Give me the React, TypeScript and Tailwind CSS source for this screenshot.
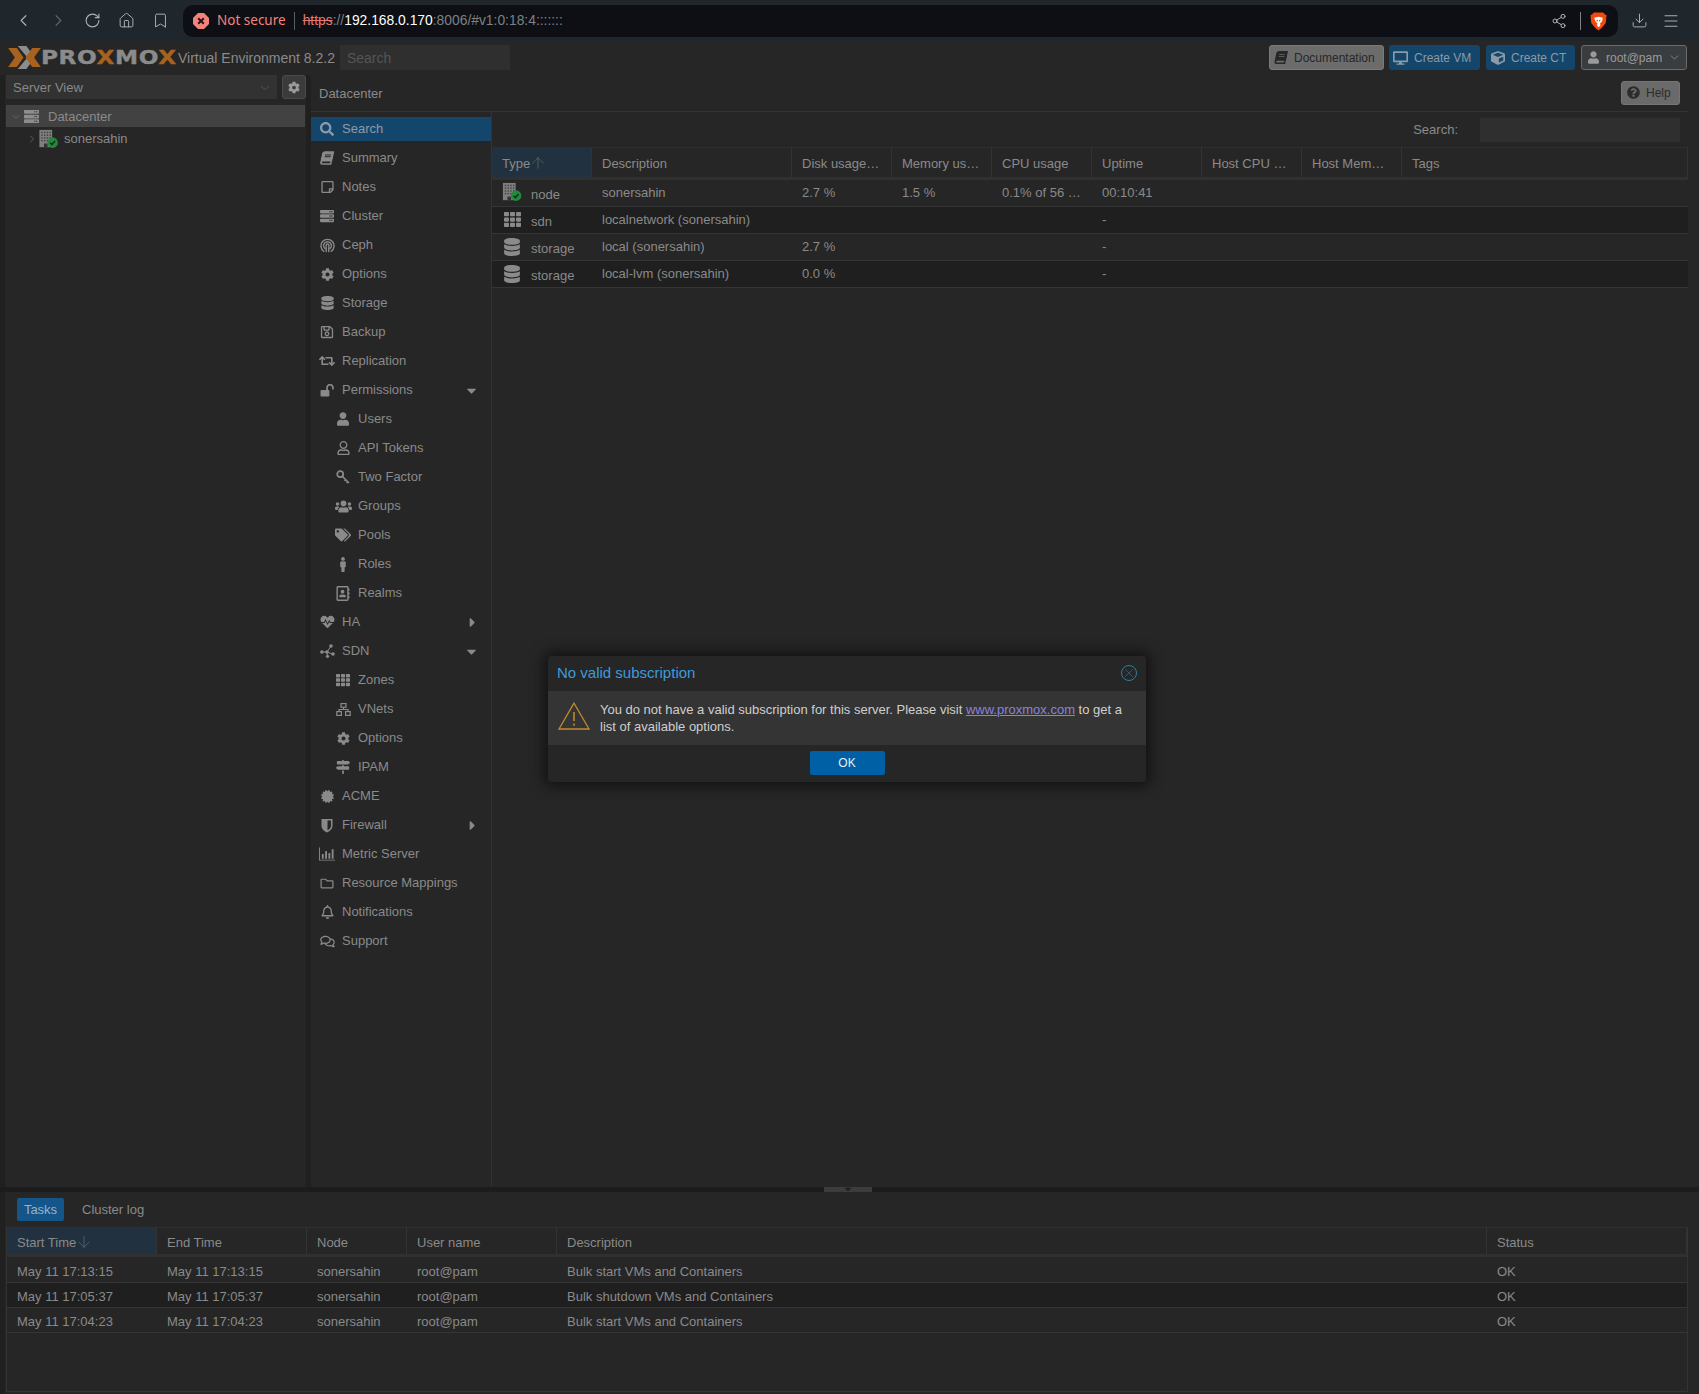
import React from "react";
import {
  FaSearch, FaBook, FaRegStickyNote, FaServer, FaCog, FaDatabase, FaRegSave, FaRetweet, FaUser, FaRegUser,
  FaUsers, FaTags, FaMale, FaRegAddressBook, FaHeartbeat, FaTh, FaMapSigns, FaCertificate,
  FaRegFolder, FaRegBell, FaRegComments, FaDesktop, FaCube, FaQuestionCircle,
  FaCaretDown, FaCaretRight,
} from "react-icons/fa";
import { ChevronLeft, ChevronRight, ChevronDown, RotateCw, Home, Bookmark, Share2, Download, Menu, ArrowUp, ArrowDown, X as XIcon } from "lucide-react";

type P = { className?: string };

const Ceph = ({ className = "" }: P) => (
  <svg viewBox="0 0 16 16" className={className} fill="none" stroke="currentColor" strokeWidth="1.5" strokeLinecap="round">
    <path d="M4 14.2A7 7 0 1 1 12 14.2" />
    <path d="M5.500 11.500A4.200 4.200 0 1 1 10.500 11.500" />
    <path d="M6.600 14.500 C7 12.500 6.300 10 6.600 8.500 A1.500 1.500 0 1 1 9.400 8.500 C9.700 10 9 12.500 9.400 14.500" />
  </svg>
);

const OpenLock = ({ className = "" }: P) => (
  <svg viewBox="0 0 16 14" className={className} fill="currentColor">
    <rect x="0.500" y="6.500" width="9.500" height="7" rx="1" />
    <path d="M7.500 6.500V4a3.200 3.200 0 0 1 6.400 0v2" fill="none" stroke="currentColor" strokeWidth="1.800" />
  </svg>
);

const KeyIcon = ({ className = "" }: P) => (
  <svg viewBox="0 0 14 14" className={className} fill="none" stroke="currentColor">
    <circle cx="4.200" cy="4.200" r="3" strokeWidth="1.700" />
    <path d="M6.500 6.500L13 13M10 9.500l-1.500 1.500M12 11.500l-1.500 1.500" strokeWidth="1.500" />
  </svg>
);

const SdnIcon = ({ className = "" }: P) => (
  <svg viewBox="0 0 15 14" className={className} fill="currentColor" stroke="currentColor">
    <path d="M7 8L11 2M7 8L2 8M7 8L12 10M7 8L7.500 12.500" strokeWidth="1" />
    <circle cx="7" cy="8" r="1.800" stroke="none" />
    <circle cx="11" cy="2" r="1.800" stroke="none" />
    <circle cx="1.900" cy="8" r="1.800" stroke="none" />
    <circle cx="13" cy="10" r="1.800" stroke="none" />
    <circle cx="7.500" cy="12.300" r="1.600" stroke="none" />
  </svg>
);

const VNetIcon = ({ className = "" }: P) => (
  <svg viewBox="0 0 15 13" className={className} fill="none" stroke="currentColor" strokeWidth="1.200">
    <rect x="5" y="0.600" width="5" height="3.600" />
    <rect x="0.800" y="8.600" width="4.600" height="3.800" />
    <rect x="9.600" y="8.600" width="4.600" height="3.800" />
    <path d="M7.500 4.200V6.500M3 8.600V6.500H12V8.600" />
  </svg>
);

const ShieldIcon = ({ className = "" }: P) => (
  <svg viewBox="0 0 12 15" className={className} fill="currentColor" fillRule="evenodd">
    <path d="M.5 1h11v7c0 3-3 5.500-5.500 6.500C3.500 13.500.5 11 .5 8zM6.500 2.500v9.800C8.300 11.300 10 9.800 10 8V2.500z" />
  </svg>
);

const MetricIcon = ({ className = "" }: P) => (
  <svg viewBox="0 0 17 14" className={className} fill="currentColor">
    <path d="M0 0h1v13h16v1H0z" />
    <rect x="3" y="7" width="2" height="5" />
    <rect x="6.500" y="4" width="2" height="8" />
    <rect x="10" y="6" width="2" height="6" />
    <rect x="13.500" y="2" width="2" height="10" />
  </svg>
);

const NodeIcon = ({ className = "" }: P) => (
  <svg viewBox="0 0 22 22" className={className}>
    <rect x="1" y="1" width="14" height="19" fill="#7f7f7f" />
    <g fill="#444">
      {[3, 6, 9, 12].map((y) =>
        [3, 6, 9, 12].map((x) => <rect key={`${x}-${y}`} x={x} y={y} width="1.600" height="1.600" />)
      )}
      <rect x="6" y="16" width="4" height="4" fill="#333" />
    </g>
    <circle cx="15.500" cy="15" r="5.800" fill="#218a3d" />
    <path d="M12.800 15.200l2 2 3.400-4" stroke="#1c2b20" strokeWidth="1.700" fill="none" />
  </svg>
);

const ProxLogo = () => (
  <div className="flex items-center w-[170px] shrink-0">
    <svg viewBox="0 0 34 26" className="w-[33px] h-[25px] shrink-0">
      <path d="M10 1h9l5 7-4 5-10-12z" fill="#8d8d8d" />
      <path d="M10 25h9l5-7-4-5-10 12z" fill="#8d8d8d" />
      <path d="M0 3h9l7 10-7 10H0l7-10z" fill="#a8621f" />
      <path d="M34 3h-9l-7 10 7 10h9l-7-10z" fill="#a8621f" />
    </svg>
    <span className="font-['DejaVu_Sans',sans-serif] font-bold text-[19px] leading-none text-[#8b8b8b] tracking-[0.5px] inline-block origin-left scale-x-[1.22] [-webkit-text-stroke:0.4px_currentColor]">
      PRO<span className="text-[#a8621f]">X</span>MO<span className="text-[#a8621f]">X</span>
    </span>
  </div>
);

const Brave = () => (
  <svg viewBox="0 0 18 20" className="w-[17px] h-[20px]">
    <path d="M4 1h10l1.800 2 1.700.6-.8 8.400L12 17.600 9 20l-3-2.400L1.300 12 .5 3.600 2.200 3z" fill="#f1490f" />
    <path d="M4.500 6.500l4.500-1 4.500 1-.8 4-2 2 .3 2.500L9 16.500 7.500 15l.3-2.500-2-2z" fill="#fff" />
    <path d="M7 8.500l1.500.8v1.200L7 10zM11 8.500l-1.500.8v1.200l1.500-.5z" fill="#f1490f" />
  </svg>
);

type NavItem = { label: string; icon: React.ReactNode; sub?: boolean; caret?: "down" | "right"; active?: boolean };
const ic = "w-[14px] h-[14px]";
const nav: NavItem[] = [
  { label: "Search", icon: <FaSearch className="w-[14px] h-[14px]" />, active: true },
  { label: "Summary", icon: <FaBook className="w-[12px] h-[14px] -skew-x-12" /> },
  { label: "Notes", icon: <FaRegStickyNote className="w-[13px] h-[14px]" /> },
  { label: "Cluster", icon: <FaServer className={ic} /> },
  { label: "Ceph", icon: <Ceph className="w-[15px] h-[15px]" /> },
  { label: "Options", icon: <FaCog className="w-[13px] h-[13px]" /> },
  { label: "Storage", icon: <FaDatabase className="w-[13px] h-[14px]" /> },
  { label: "Backup", icon: <FaRegSave className="w-[14px] h-[14px]" /> },
  { label: "Replication", icon: <FaRetweet className="w-[16px] h-[14px]" /> },
  { label: "Permissions", icon: <OpenLock className="w-[15px] h-[13px]" />, caret: "down" },
  { label: "Users", icon: <FaUser className="w-[12px] h-[14px]" />, sub: true },
  { label: "API Tokens", icon: <FaRegUser className="w-[13px] h-[14px]" />, sub: true },
  { label: "Two Factor", icon: <KeyIcon className="w-[14px] h-[14px]" />, sub: true },
  { label: "Groups", icon: <FaUsers className="w-[17px] h-[15px]" />, sub: true },
  { label: "Pools", icon: <FaTags className="w-[16px] h-[14px]" />, sub: true },
  { label: "Roles", icon: <FaMale className="w-[12px] h-[15px]" />, sub: true },
  { label: "Realms", icon: <FaRegAddressBook className="w-[14px] h-[15px]" />, sub: true },
  { label: "HA", icon: <FaHeartbeat className="w-[15px] h-[14px]" />, caret: "right" },
  { label: "SDN", icon: <SdnIcon className="w-[15px] h-[14px]" />, caret: "down" },
  { label: "Zones", icon: <FaTh className={ic} />, sub: true },
  { label: "VNets", icon: <VNetIcon className="w-[15px] h-[13px]" />, sub: true },
  { label: "Options", icon: <FaCog className="w-[13px] h-[13px]" />, sub: true },
  { label: "IPAM", icon: <FaMapSigns className={ic} />, sub: true },
  { label: "ACME", icon: <FaCertificate className="w-[13px] h-[13px]" /> },
  { label: "Firewall", icon: <ShieldIcon className="w-[12px] h-[15px]" />, caret: "right" },
  { label: "Metric Server", icon: <MetricIcon className="w-[16px] h-[14px]" /> },
  { label: "Resource Mappings", icon: <FaRegFolder className="w-[14px] h-[13px]" /> },
  { label: "Notifications", icon: <FaRegBell className="w-[13px] h-[14px]" /> },
  { label: "Support", icon: <FaRegComments className="w-[15px] h-[13px]" /> },
];

const resCols = [
  { t: "Type", w: "w-[100px]" },
  { t: "Description", w: "w-[200px]" },
  { t: "Disk usage…", w: "w-[100px]" },
  { t: "Memory us…", w: "w-[100px]" },
  { t: "CPU usage", w: "w-[100px]" },
  { t: "Uptime", w: "w-[110px]" },
  { t: "Host CPU …", w: "w-[100px]" },
  { t: "Host Mem…", w: "w-[100px]" },
  { t: "Tags", w: "flex-1" },
];

const resRows = [
  { type: "node", icon: <NodeIcon className="w-[22px] h-[22px]" />, desc: "sonersahin", disk: "2.7 %", mem: "1.5 %", cpu: "0.1% of 56 …", up: "00:10:41", alt: false },
  { type: "sdn", icon: <FaTh className="w-[17px] h-[17px]" />, desc: "localnetwork (sonersahin)", disk: "", mem: "", cpu: "", up: "-", alt: true },
  { type: "storage", icon: <FaDatabase className="w-[16px] h-[18px] mt-[1px]" />, desc: "local (sonersahin)", disk: "2.7 %", mem: "", cpu: "", up: "-", alt: false },
  { type: "storage", icon: <FaDatabase className="w-[16px] h-[18px] mt-[1px]" />, desc: "local-lvm (sonersahin)", disk: "0.0 %", mem: "", cpu: "", up: "-", alt: true },
];

const taskCols = [
  { t: "Start Time", w: "w-[150px]" },
  { t: "End Time", w: "w-[150px]" },
  { t: "Node", w: "w-[100px]" },
  { t: "User name", w: "w-[150px]" },
  { t: "Description", w: "w-[930px]" },
  { t: "Status", w: "flex-1" },
];
const tasks = [
  ["May 11 17:13:15", "sonersahin", "root@pam", "Bulk start VMs and Containers", false],
  ["May 11 17:05:37", "sonersahin", "root@pam", "Bulk shutdown VMs and Containers", true],
  ["May 11 17:04:23", "sonersahin", "root@pam", "Bulk start VMs and Containers", false],
] as const;

export default function App() {
  return (
    <div className="relative w-[1699px] h-[1394px] overflow-hidden flex flex-col bg-[#262626] text-[13px] text-[#8a8a8a] font-['Liberation_Sans',Arial,sans-serif]">
      {/* Browser toolbar */}
      <div className="h-[41px] shrink-0 bg-[#1f272d] flex items-center font-['Noto_Sans',sans-serif]">
        <div className="w-[183px] shrink-0 flex items-center text-[#a9aeb3]">
          <ChevronLeft className="w-[19px] h-[19px] ml-[14px]" strokeWidth={1.5} />
          <ChevronRight className="w-[19px] h-[19px] ml-[16px] text-[#5d6368]" strokeWidth={1.5} />
          <RotateCw className="w-[17px] h-[17px] ml-[16px]" strokeWidth={1.6} />
          <Home className="w-[17px] h-[17px] ml-[17px]" strokeWidth={1.4} />
          <Bookmark className="w-[17px] h-[17px] ml-[17px]" strokeWidth={1.4} />
        </div>
        <div className="w-[1435px] h-[32px] rounded-[10px] bg-[#0d0f14] flex items-center shrink-0">
          <svg viewBox="0 0 16 16" className="ml-[10px] w-[16px] h-[16px] shrink-0">
            <path d="M5 0h6l5 5v6l-5 5H5l-5-5V5z" fill="#f2837c" />
            <path d="M5.200 5.200l5.600 5.600M10.800 5.200l-5.600 5.600" stroke="#2a1312" strokeWidth="2" />
          </svg>
          <span className="ml-[8px] text-[#f2837c] text-[13.5px]">Not secure</span>
          <span className="ml-[8px] w-px h-[18px] bg-[#5a5f64]" />
          <span className="ml-[8px] text-[13.85px] text-[#7c8186] font-['Liberation_Sans',sans-serif]">
            <span className="text-[#e3776f] line-through">https</span>://<span className="text-white">192.168.0.170</span>:8006/#v1:0:18:4:::::::
          </span>
          <div className="ml-auto flex items-center text-[#b5babf]">
            <Share2 className="w-[16px] h-[16px]" strokeWidth={1.4} />
            <span className="ml-[13px] w-px h-[18px] bg-[#7c8186]" />
            <span className="ml-[9px] mr-[11px] flex"><Brave /></span>
          </div>
        </div>
        <div className="flex-1 flex items-center text-[#a9aeb3]">
          <Download className="w-[17px] h-[17px] ml-[13px]" strokeWidth={1.4} />
          <Menu className="w-[18px] h-[18px] ml-[14px]" strokeWidth={1.4} />
        </div>
      </div>

      {/* Proxmox header */}
      <div className="h-[34px] shrink-0 flex items-start pt-[4px] pl-[8px] pr-[12px]">
        <ProxLogo />
        <span className="text-[14px] leading-[26px] text-[#8a8a8a]">Virtual Environment 8.2.2</span>
        <div className="ml-[5px] w-[170px] h-[25px] bg-[#2f2f2f] text-[#555] px-[7px] leading-[26px] text-[14px]">Search</div>
        <div className="ml-auto flex h-[25px] text-[12px]">
          <div className="w-[115px] flex items-center rounded-[3px] bg-[#6c6c6c] border border-[#7a7a7a] text-[#272727] pl-[5px]">
            <FaBook className="w-[12px] h-[13px] -skew-x-12" /><span className="ml-[7px]">Documentation</span>
          </div>
          <div className="w-[91px] ml-[5px] flex items-center rounded-[3px] bg-[#14466b] text-[#8b9aa6] pl-[4px]">
            <FaDesktop className="w-[15px] h-[14px]" /><span className="ml-[6px]">Create VM</span>
          </div>
          <div className="w-[89px] ml-[6px] flex items-center rounded-[3px] bg-[#14466b] text-[#8b9aa6] pl-[5px]">
            <FaCube className="w-[14px] h-[14px]" /><span className="ml-[6px]">Create CT</span>
          </div>
          <div className="w-[106px] ml-[6px] flex items-center rounded-[3px] bg-[#3a3d3f] border border-[#6a6a6a] text-[#9a9a9a] pl-[6px]">
            <FaUser className="w-[11px] h-[13px]" /><span className="ml-[7px]">root@pam</span>
            <ChevronDown className="w-[13px] h-[13px] ml-auto mr-[5px]" strokeWidth={1.3} />
          </div>
        </div>
      </div>

      {/* Main */}
      <div className="flex-1 flex min-h-0 border-l-[5px] border-[#202020]">
        {/* Left tree */}
        <div className="w-[301px] shrink-0 flex flex-col pl-[1px]">
          <div className="flex gap-[5px] h-[24px]">
            <div className="w-[271px] bg-[#323232] flex items-center pl-[7px] pt-[2px] text-[#888]">
              Server View
              <ChevronDown className="w-[14px] h-[14px] ml-auto mr-[5px] text-[#5c5c5c]" strokeWidth={1.4} />
            </div>
            <div className="w-[24px] bg-[#3b3b3b] border border-[#4a4a4a] rounded-[3px] flex items-center justify-center">
              <FaCog className="w-[12px] h-[13px] text-[#9b9b9b]" />
            </div>
          </div>
          <div className="mt-[6px] pr-[1px]">
            <div className="h-[22px] bg-[#424242] flex items-center pt-[1px] text-[#8a8a8a]">
              <ChevronDown className="w-[12px] h-[12px] ml-[4px] text-[#777]" strokeWidth={1.3} />
              <FaServer className="w-[17px] h-[15px] ml-[1px] text-[#8d8d8d]" />
              <span className="ml-[8px]">Datacenter</span>
            </div>
            <div className="h-[22px] flex items-center pt-[1px]">
              <ChevronRight className="w-[12px] h-[12px] ml-[20px] text-[#777]" strokeWidth={1.3} />
              <NodeIcon className="w-[21px] h-[20px]" />
              <span className="ml-[5px]">sonersahin</span>
            </div>
          </div>
        </div>

        {/* Divider gap */}
        <div className="w-[5px] shrink-0 bg-[#202020]" />

        {/* Center panel */}
        <div className="flex-1 min-w-0 flex flex-col pr-[11px]">
          <div className="h-[37px] shrink-0 flex items-center justify-between border-b border-[#333] pb-[1px]">
            <span className="ml-[8px] mt-[2px] text-[13px]">Datacenter</span>
            <div className="w-[59px] h-[24px] mr-[8px] flex items-center rounded-[3px] bg-[#6a6a6a] border border-[#757575] text-[#2c2c2c] text-[12px] pl-[5px]">
              <FaQuestionCircle className="w-[13px] h-[13px]" /><span className="ml-[6px]">Help</span>
            </div>
          </div>
          <div className="flex-1 min-h-0 flex">
            {/* Nav */}
            <div className="w-[181px] shrink-0 border-r border-[#333] pt-[5px]">
              {nav.map((n, i) => (
                <div
                  key={i}
                  className={`relative flex items-center ${n.active ? "h-[24px] mb-[2.5px] bg-[#14466b] text-[#8c9ba7]" : "h-[29px]"}`}
                >
                  <span className={`flex items-center justify-center w-[20px] ${n.sub ? "ml-[22px]" : "ml-[6px]"}`}>{n.icon}</span>
                  <span className="ml-[5px]">{n.label}</span>
                  {n.caret === "down" && <FaCaretDown className="absolute right-[12px] w-[15px] h-[15px] text-[#8a8a8a]" />}
                  {n.caret === "right" && <FaCaretRight className="absolute right-[11px] w-[15px] h-[15px] text-[#8a8a8a]" />}
                </div>
              ))}
            </div>
            {/* Content */}
            <div className="flex-1 min-w-0 flex flex-col">
              <div className="h-[36px] shrink-0 flex items-center justify-end border-b border-[#2d2d2d] pr-[8px]">
                <span className="mr-[22px]">Search:</span>
                <div className="w-[200px] h-[24px] bg-[#2f2f2f]" />
              </div>
              <div className="flex h-[32px] shrink-0 border-b-[3px] border-[#303030]">
                {resCols.map((c, i) => (
                  <div
                    key={c.t}
                    className={`${c.w} flex items-center pl-[10px] pt-[2px] border-r border-[#333] ${i === 0 ? "bg-[#22313f]" : ""}`}
                  >
                    {c.t}
                    {i === 0 && <ArrowUp className="w-[18px] h-[18px] -ml-[1px] -mt-[2px] text-[#5f6a73]" strokeWidth={1} />}
                  </div>
                ))}
              </div>
              {resRows.map((r, i) => (
                <div key={i} className={`flex h-[27px] shrink-0 border-b border-[#353535] ${r.alt ? "bg-[#1f1f1f]" : ""}`}>
                  <div className="w-[100px] flex items-center pl-[10px] text-[#8a8a8a]">
                    <span className="w-[20px] -mt-[2px] flex items-center justify-center shrink-0">{r.icon}</span>
                    <span className="ml-[9px] mt-[3px]">{r.type}</span>
                  </div>
                  <div className="w-[200px] pl-[10px] flex items-center">{r.desc}</div>
                  <div className="w-[100px] pl-[10px] flex items-center">{r.disk}</div>
                  <div className="w-[100px] pl-[10px] flex items-center">{r.mem}</div>
                  <div className="w-[100px] pl-[10px] flex items-center">{r.cpu}</div>
                  <div className="w-[110px] pl-[10px] flex items-center">{r.up}</div>
                </div>
              ))}
            </div>
          </div>
        </div>
      </div>

      {/* Splitter */}
      <div className="h-[5px] shrink-0 bg-[#1c1c1c] flex justify-center">
        <div className="w-[48px] h-[5px] ml-[-4px] bg-[#3c3c3c] flex justify-center">
          <FaCaretDown className="w-[12px] h-[10px] -mt-[3px] text-[#1e1e1e]" />
        </div>
      </div>

      {/* Bottom panel */}
      <div className="h-[202px] shrink-0 border-l-[5px] border-[#202020] pl-[1px] pr-[11px] flex flex-col">
        <div className="h-[35px] shrink-0 flex items-start pt-[6px]">
          <div className="ml-[11px] w-[47px] h-[23px] rounded-[2px] bg-[#14558a] text-[#9eb2c2] flex items-center justify-center">Tasks</div>
          <span className="ml-[18px] leading-[23px]">Cluster log</span>
        </div>
        <div className="flex-1 min-h-0 mb-[2px] border border-t-0 border-[#333]">
          <div className="flex h-[30px] border-y-[1px] border-b-[3px] border-[#303030]">
            {taskCols.map((c, i) => (
              <div key={c.t} className={`${c.w} flex items-center pl-[10px] pt-[4px] border-r border-[#333] ${i === 0 ? "bg-[#22313f]" : ""}`}>
                {c.t}
                {i === 0 && <ArrowDown className="w-[18px] h-[18px] -ml-[1px] -mt-[2px] text-[#5f6a73]" strokeWidth={1} />}
              </div>
            ))}
          </div>
          {tasks.map((t, i) => (
            <div key={i} className={`flex border-b border-[#353535] items-center ${i === 0 ? "h-[26px] pt-[5px]" : "h-[25px] pt-[3px]"} ${t[4] ? "bg-[#1f1f1f]" : ""}`}>
              <div className="w-[150px] pl-[10px]">{t[0]}</div>
              <div className="w-[150px] pl-[10px]">{t[0]}</div>
              <div className="w-[100px] pl-[10px]">{t[1]}</div>
              <div className="w-[150px] pl-[10px]">{t[2]}</div>
              <div className="w-[930px] pl-[10px]">{t[3]}</div>
              <div className="flex-1 pl-[10px]">OK</div>
            </div>
          ))}
        </div>
      </div>

      {/* Modal */}
      <div className="absolute left-[548px] top-[656px] w-[598px] h-[126px] rounded-[3px] bg-[#262626] shadow-[0_0_14px_4px_rgba(0,0,0,0.55)] flex flex-col">
        <div className="h-[35px] shrink-0 flex items-center justify-between pl-[9px] pr-[9px]">
          <span className="text-[15px] text-[#3d9bdc]">No valid subscription</span>
          <span className="w-[16px] h-[16px] -mt-px rounded-full border border-[#2a7ea8] flex items-center justify-center">
            <XIcon className="w-[14px] h-[14px] text-[#2a7ea8]" strokeWidth={1} />
          </span>
        </div>
        <div className="h-[54px] shrink-0 bg-[#343434] flex pl-[10px] pr-[20px]">
          <svg viewBox="0 0 32 28" className="w-[32px] h-[28px] mt-[11px] shrink-0" fill="none" stroke="#c08a2e" strokeWidth="1.300">
            <path d="M16 1.200L1 27h30z" strokeLinejoin="miter" />
            <path d="M16 10v9" strokeWidth="1.600" />
            <path d="M16 21.500v2.200" strokeWidth="1.600" />
          </svg>
          <p className="ml-[10px] mt-[10px] text-[13px] leading-[17px] text-[#cfcfcf]">
            You do not have a valid subscription for this server. Please visit{" "}
            <span className="text-[#8a83dd] underline">www.proxmox.com</span> to get a list of available options.
          </p>
        </div>
        <div className="flex-1 flex items-start justify-center pt-[6px]">
          <div className="w-[75px] h-[24px] rounded-[2px] bg-[#0060a6] text-[#e6eef5] text-[12px] flex items-center justify-center">OK</div>
        </div>
      </div>
    </div>
  );
}
